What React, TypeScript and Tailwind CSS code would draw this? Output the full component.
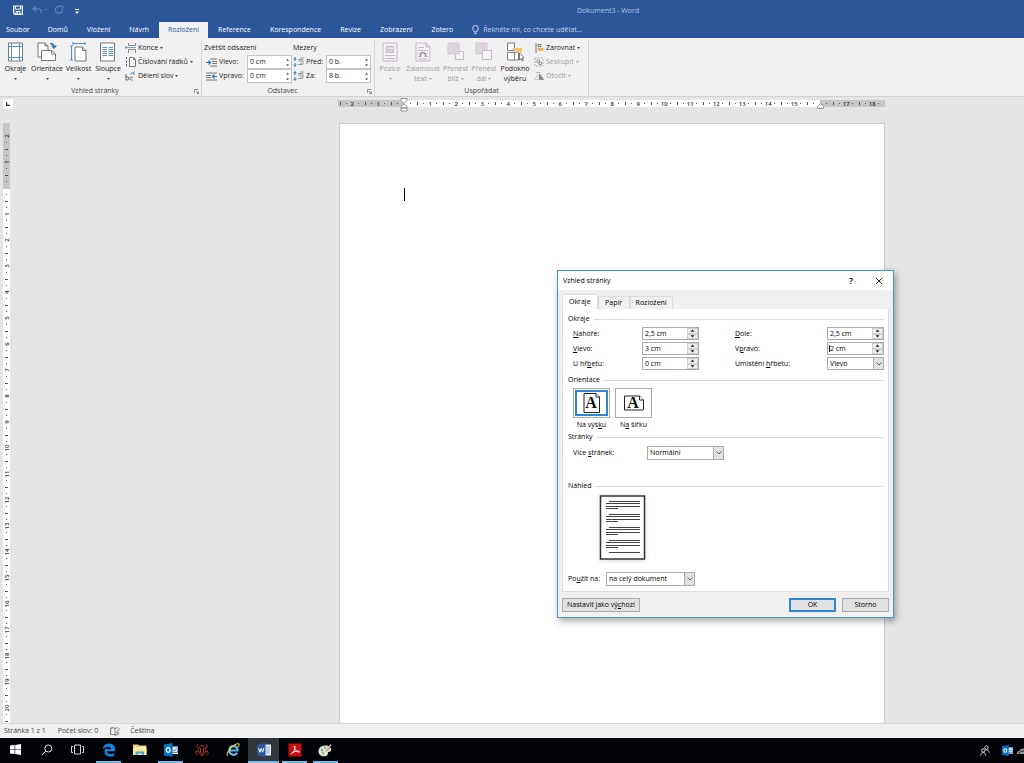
import React, { useId, useState } from "react";

const RIBBON_TABS = [
  "Soubor",
  "Domů",
  "Vložení",
  "Návrh",
  "Rozložení",
  "Reference",
  "Korespondence",
  "Revize",
  "Zobrazení",
  "Zotero",
];

/* ---------- small helpers ---------- */

function Caret({ className = "" }: { className?: string }) {
  return (
    <svg width="3" height="2" viewBox="0 0 3 2" className={`inline-block opacity-80 ${className}`}>
      <path d="M0 0h3L1.500 2z" fill="currentColor" />
    </svg>
  );
}

function Stepper({ boxed = false, name }: { boxed?: boolean; name: string }) {
  const btn = boxed
    ? "flex flex-1 items-center justify-center border border-[#cfcfcf] bg-[#f0f0f0]"
    : "flex flex-1 items-center justify-center";
  return (
    <div className={`flex shrink-0 flex-col text-[#222] ${boxed ? "w-[11px]" : "w-2"}`}>
      <button type="button" aria-label={`${name} více`} className={btn}>
        <svg width="5" height="3" viewBox="0 0 5 3">
          <path d={boxed ? "M.5 2.700L2.500.5L4.500 2.700z" : "M1 2.500L2.500 1L4 2.500z"} fill="currentColor" />
        </svg>
      </button>
      <button type="button" aria-label={`${name} méně`} className={btn}>
        <svg width="5" height="3" viewBox="0 0 5 3">
          <path d={boxed ? "M.5.3L2.500 2.500L4.500.3z" : "M1 .5L2.500 2L4 .5z"} fill="currentColor" />
        </svg>
      </button>
    </div>
  );
}

/* ---------- title bar + tabs ---------- */

function TitleBar() {
  return (
    <div className="relative flex h-[22px] items-center text-white">
      <div className="flex items-center pb-[2px] pl-[13px]">
        <button type="button" aria-label="Uložit" className="w-[19px]">
          <svg width="10" height="10" viewBox="0 0 10 10" fill="none" stroke="#fff">
            <path d="M.7 1h8.600v8.300H1.700L.7 8.300z" strokeWidth="1.200" />
            <path d="M2.500 1v3.200h5V1" />
            <path d="M3 9V6.500h4V9M4.500 7v2" />
          </svg>
        </button>
        <button type="button" aria-label="Zpět" className="w-[22px] text-[#5f80b8]">
          <svg width="16" height="10" viewBox="0 0 16 10" fill="none" stroke="currentColor" strokeWidth="1.200">
            <path d="M4 1L1 3.800L4 6.500M1 3.800h5c2.500 0 3.500 1.400 3 4" />
            <path d="M12.500 4h3L14 5.500z" fill="currentColor" stroke="none" />
          </svg>
        </button>
        <button type="button" aria-label="Opakovat" className="w-[21px] text-[#5f80b8]">
          <svg width="10" height="10" viewBox="0 0 10 10" fill="none" stroke="currentColor" strokeWidth="1.200">
            <path d="M6.500 1.700A3.500 3.500 0 1 0 8.300 4M5.500 1H9M8.500.5v3.300" />
          </svg>
        </button>
        <button type="button" aria-label="Přizpůsobit panel" className="pt-[2px]">
          <svg width="4" height="5" viewBox="0 0 4 5" fill="#fff">
            <path d="M0 0h4v1H0zM0 2.500h4L2 5z" />
          </svg>
        </button>
      </div>
      <div className="absolute left-[577px] text-[#b4c5e0]">Dokument3 - Word</div>
    </div>
  );
}

function RibbonTabs({ active, onChange }: { active: string; onChange: (t: string) => void }) {
  return (
    <nav className="flex h-4 gap-px text-white">
      {RIBBON_TABS.map((tab) => (
        <button
          key={tab}
          type="button"
          onClick={() => onChange(tab)}
          className={`whitespace-nowrap ${tab === "Soubor" ? "pr-2 pl-[6px]" : "px-[9px]"} ${
            tab === active ? "bg-[#f1f1f1] text-[#2b579a]" : ""
          }`}
        >
          {tab}
        </button>
      ))}
      <button type="button" className="flex items-center gap-1 pl-[9px] text-[#c5d2e8]">
        <svg width="7" height="10" viewBox="0 0 7 10" fill="none" stroke="#e4ebf6" strokeWidth=".9">
          <path d="M2.200 7V5.900C1.200 5.200.7 4.400.7 3.300a2.800 2.800 0 0 1 5.600 0c0 1.100-.5 1.900-1.500 2.600V7zM2.300 8.700h2.400" />
        </svg>
        Řekněte mi, co chcete udělat...
      </button>
    </nav>
  );
}

/* ---------- ribbon icons ---------- */

const MarginsIcon = () => (
  <svg width="18" height="20" viewBox="0 0 18 20" fill="none">
    <path d="M1.500 1h14v18h-14z" fill="#fff" stroke="#777" />
    <path d="M4.500 1v18M12.500 1v18M1.500 4.500h14M1.500 15.500h14" stroke="#5a8fc4" />
  </svg>
);

const OrientationIcon = () => (
  <svg width="20" height="20" viewBox="0 0 20 20" fill="none">
    <path d="M1 1h7l3 3v11H1z" fill="#fff" stroke="#777" />
    <path d="M8 1v3h3" stroke="#777" />
    <path d="M4.500 8.500h10l4 3.500v6.500h-14z" fill="#fff" stroke="#777" />
    <path d="M14.500 8.500V12h4" stroke="#777" />
    <path d="M13 1.500c3 0 4 1 4 3.500M14.700 3.500L17 6l2.300-2.500" stroke="#2e75b6" strokeWidth="1.400" />
  </svg>
);

const SizeIcon = () => (
  <svg width="18" height="20" viewBox="0 0 18 20" fill="none">
    <path d="M3 1.500h12M3 0v3M15 0v3M1.500 4v14M0 4h3M0 18h3" stroke="#5a8fc4" />
    <path d="M5 5h7.500L16 8.500V19H5z" fill="#fff" stroke="#777" />
    <path d="M12.500 5v3.500H16" stroke="#777" />
  </svg>
);

const ColumnsIcon = () => (
  <svg width="18" height="20" viewBox="0 0 18 20" fill="none">
    <path d="M1.500 1h14v18h-14z" fill="#fff" stroke="#777" />
    <path
      d="M3.500 5.500H8M3.500 7.500H8M3.500 9.500H8M3.500 11.500H8M3.500 13.500H8M9.500 5.500H14M9.500 7.500H14M9.500 9.500H14M9.500 11.500H14M9.500 13.500H14"
      stroke="#5a8fc4"
    />
  </svg>
);

const BreaksIcon = () => (
  <svg width="11" height="10" viewBox="0 0 11 10" fill="none" stroke="#888">
    <path d="M3.500 0v2.500h7V0M3.500 10V6.500h7V10" />
    <path d="M0 4.500h11M1.500 3L0 4.500L1.500 6" stroke="#5a8fc4" strokeWidth=".8" />
  </svg>
);

const LineNumbersIcon = () => (
  <svg width="11" height="10" viewBox="0 0 11 10" fill="none" stroke="#777">
    <path d="M4.500.5h4l2 2v7h-6zM8.500.5v2h2" fill="#fff" />
    <path d="M1.500 0v2M1.500 3.500v2M1.500 7v2.500" stroke="#2e75b6" />
  </svg>
);

const HyphenIcon = () => (
  <svg width="11" height="10" viewBox="0 0 11 10" fill="none" stroke="#555" strokeWidth=".9">
    <path d="M1 3v6h1.200a1.600 1.600 0 0 0 0-3.200H1M7.500 6.200H6.300a1.300 1.300 0 0 0 0 2.800H7.500" />
    <path d="M5 3.500l1.500-1.500h2M9.800.8a1.300 1.300 0 1 0 0 2.600" stroke="#2e75b6" />
  </svg>
);

const IndentIcon = ({ flip = false }: { flip?: boolean }) => (
  <svg width="11" height="9" viewBox="0 0 11 9" fill="none">
    <path
      d={flip ? "M0 1h11M0 3.500h5M0 5.500h5M0 8h11" : "M4 1h7M6 3.500h5M6 5.500h5M4 8h7"}
      stroke="#777"
    />
    <path d={flip ? "M11 4.500H6.500M8.500 2.500l-2 2l2 2" : "M0 4.500h4.500M2.500 2.500l2 2l-2 2"} stroke="#2e75b6" strokeWidth="1.200" />
  </svg>
);

const SpacingIcon = () => (
  <svg width="11" height="10" viewBox="0 0 11 10" fill="none">
    <path d="M2 .5v3.500M2 6v3.500M.5 2.300L2 .8l1.500 1.500M.5 7.700L2 9.200l1.500-1.500" stroke="#2e75b6" />
    <path d="M7 1h4M5 2.500h5M5 4h6M7 6h4M5 7.500h5" stroke="#888" strokeWidth=".8" />
  </svg>
);

const PositionIcon = () => (
  <svg width="18" height="20" viewBox="0 0 18 20" fill="none" stroke="#c2bac3">
    <path d="M2 1h14v18H2z" fill="#f5f0f5" />
    <path d="M5.500 4.500h7v6h-7z" fill="#e6dfe6" />
    <path d="M6 10l2-3l1.500 2l1-1l2 2M4 13.500h10M4 16.500h10" />
  </svg>
);

const WrapIcon = () => (
  <svg width="18" height="20" viewBox="0 0 18 20" fill="none" stroke="#c2bac3">
    <path d="M2 1h10l4 4v14H2zM12 1v4h4" fill="#f5f0f5" />
    <path d="M4 5.500h6M4 8.500h10M4 11.500h1.500M12.500 11.500H14M4 14.500h1.500M12.500 14.500H14M4 17h10" />
    <path d="M6.500 15v-2a2.500 2.500 0 0 1 5 0v2" stroke="#9b959e" strokeWidth="1.600" />
  </svg>
);

const BringForwardIcon = () => (
  <svg width="18" height="20" viewBox="0 0 18 20" fill="none" stroke="#c5bcc6">
    <path d="M8.500 9.500h8v8h-8z" fill="#f7f4f7" />
    <path d="M1 1h11v11H1z" fill="#ddd4dd" stroke="#d2c8d2" />
  </svg>
);

const SendBackIcon = () => (
  <svg width="18" height="20" viewBox="0 0 18 20" fill="none" stroke="#c5bcc6">
    <path d="M1 1h11v11H1z" fill="#ddd4dd" stroke="#d2c8d2" />
    <path d="M7.500 8.500h9v9h-9z" fill="#f7f4f7" />
  </svg>
);

const SelectionPaneIcon = () => (
  <svg width="18" height="20" viewBox="0 0 18 20" fill="none">
    <path d="M1.500 1h7v7.500h-7zM1.500 10.500h7V18h-7zM8.500 10.500h4V18h-4" fill="#fff" stroke="#7d7d7d" />
    <path d="M6.500 6H16v4.500H10V8H6.500z" fill="#f2c46c" />
    <path d="M13.500 11v7l1.600-1.500l1 2.500l1.200-.6l-1-2.300h2z" fill="#fff" stroke="#555" strokeWidth=".8" />
  </svg>
);

const AlignIcon = () => (
  <svg width="10" height="10" viewBox="0 0 10 10" fill="none" stroke="#777">
    <path d="M2 0v10" />
    <path d="M4 1.500h3v2H4z" />
    <path d="M4 5h5v2.500H4z" fill="#f2b75c" stroke="#e0a040" strokeWidth=".6" />
  </svg>
);

const GroupIcon = () => (
  <svg width="10" height="10" viewBox="0 0 10 10" fill="none" stroke="#b6aeb6">
    <path d="M1 1h8v8H1z" strokeDasharray="2 1" />
    <path d="M3 3h2.500v2.500H3zM5 5h2.500v2.500H5z" stroke="#a39ba3" />
  </svg>
);

const RotateIcon = () => (
  <svg width="10" height="10" viewBox="0 0 10 10" fill="none" stroke="#b6aeb6">
    <path d="M4 8.500V3L.5 8.500z" strokeDasharray="1 1" />
    <path d="M5.500 3v5.500H9.500z" fill="#8d878d" stroke="#8d878d" />
    <path d="M2 1.500h4" />
  </svg>
);

/* ---------- ribbon ---------- */

interface LargeButtonProps {
  icon: React.ReactNode;
  label: string;
  second?: string;
  caret?: boolean;
  disabled?: boolean;
  className: string;
}

function LargeButton({ icon, label, second, caret = true, disabled, className }: LargeButtonProps) {
  return (
    <button
      type="button"
      disabled={disabled}
      className={`flex shrink-0 flex-col items-center whitespace-nowrap ${disabled ? "text-[#9c9c9c]" : "text-[#222]"} ${className}`}
    >
      {icon}
      <span className="mt-[2px] leading-[10px]">{label}</span>
      <span className="flex h-[10px] items-center gap-[2px] leading-[10px]">
        {second}
        {caret && <Caret />}
      </span>
    </button>
  );
}

function SmallButton({ icon, label, disabled }: { icon: React.ReactNode; label: string; disabled?: boolean }) {
  return (
    <button
      type="button"
      disabled={disabled}
      className={`flex h-[14px] items-center gap-[2px] whitespace-nowrap ${disabled ? "text-[#9c9c9c]" : "text-[#222]"}`}
    >
      {icon}
      {label}
      <Caret />
    </button>
  );
}

function SpinField({ icon, label, value, labelWidth }: { icon: React.ReactNode; label: string; value: string; labelWidth: string }) {
  const id = useId();
  return (
    <div className="flex h-[14px] items-center">
      {icon}
      <label htmlFor={id} className={`pl-[2px] ${labelWidth}`}>
        {label}
      </label>
      <div className="flex h-[14px] w-[45px] border border-[#c6c6c6] bg-white">
        <input id={id} defaultValue={value} className="w-full min-w-0 bg-transparent pl-[2px] outline-none" />
        <Stepper name={label} />
      </div>
    </div>
  );
}

function RibbonGroup({ title, launcher, className, children }: { title: string; launcher?: boolean; className: string; children: React.ReactNode }) {
  return (
    <section className={`flex shrink-0 flex-col border-r border-[#d8d8d8] ${className}`}>
      <div className="flex h-[46px]">{children}</div>
      <div className={`relative h-[10px] text-center leading-[10px] text-[#444] ${launcher ? "pr-[11px]" : ""}`}>
        {title}
        {launcher && (
          <button type="button" aria-label={`${title} – další možnosti`} className="absolute top-[3px] right-[2px]">
            <svg width="5" height="5" viewBox="0 0 5 5" fill="none" stroke="#777" strokeWidth=".8">
              <path d="M.5 4V.5H4M2 2l2.500 2.500M4.500 2.500v2h-2" />
            </svg>
          </button>
        )}
      </div>
    </section>
  );
}

function Ribbon() {
  return (
    <div className="flex h-[59px] border-b border-[#d2d2d2] bg-[#f1f1f1] pt-[2px] text-[#222]">
      <RibbonGroup title="Vzhled stránky" launcher className="w-[202px]">
        <div className="flex pt-[2px]">
          <LargeButton icon={<MarginsIcon />} label="Okraje" className="w-[31px]" />
          <LargeButton icon={<OrientationIcon />} label="Orientace" className="w-[32px]" />
          <LargeButton icon={<SizeIcon />} label="Velikost" className="w-[31px]" />
          <LargeButton icon={<ColumnsIcon />} label="Sloupce" className="w-[28px]" />
        </div>
        <div className="flex flex-col pt-px pl-[3px]">
          <SmallButton icon={<BreaksIcon />} label="Konce" />
          <SmallButton icon={<LineNumbersIcon />} label="Číslování řádků" />
          <SmallButton icon={<HyphenIcon />} label="Dělení slov" />
        </div>
      </RibbonGroup>

      <RibbonGroup title="Odstavec" launcher className="w-[173px]">
        <div className="w-[90px] pt-px pl-[2px]">
          <div className="h-[14px] leading-[14px]">Zvětšit odsazení</div>
          <div className="pl-[2px]">
            <SpinField icon={<IndentIcon />} label="Vlevo:" value="0 cm" labelWidth="w-[30px]" />
            <SpinField icon={<IndentIcon flip />} label="Vpravo:" value="0 cm" labelWidth="w-[30px]" />
          </div>
        </div>
        <div className="pt-px pl-[1px]">
          <div className="h-[14px] leading-[14px]">Mezery</div>
          <SpinField icon={<SpacingIcon />} label="Před:" value="0 b." labelWidth="w-[22px]" />
          <SpinField icon={<SpacingIcon />} label="Za:" value="8 b." labelWidth="w-[22px]" />
        </div>
      </RibbonGroup>

      <RibbonGroup title="Uspořádat" className="w-[214px]">
        <div className="flex pt-[2px]">
          <LargeButton icon={<PositionIcon />} label="Pozice" disabled className="w-[30px]" />
          <LargeButton icon={<WrapIcon />} label="Zalamovat" second="text" disabled className="w-[36px]" />
          <LargeButton icon={<BringForwardIcon />} label="Přenést" second="blíž" disabled className="w-[29px]" />
          <LargeButton icon={<SendBackIcon />} label="Přenést" second="dál" disabled className="w-[28px]" />
          <LargeButton icon={<SelectionPaneIcon />} label="Podokno" second="výběru" caret={false} className="w-[34px]" />
        </div>
        <div className="flex flex-col pt-px pl-[2px]">
          <SmallButton icon={<AlignIcon />} label="Zarovnat" />
          <SmallButton icon={<GroupIcon />} label="Seskupit" disabled />
          <SmallButton icon={<RotateIcon />} label="Otočit" disabled />
        </div>
      </RibbonGroup>
    </div>
  );
}

/* ---------- rulers ---------- */

// one centimetre: number, dot, half tick, dot
function RulerCell({ n, vertical = false }: { n: number; vertical?: boolean }) {
  const hidden = n === 0 || (!vertical && n === 16);
  return (
    <div
      className={`grid shrink-0 items-center justify-items-center ${vertical ? "h-[26px] w-full grid-rows-4" : "h-full w-[26px] grid-cols-4"}`}
    >
      <span className={`flex h-0 w-0 items-center justify-center ${vertical ? "-rotate-90" : ""}`}>{hidden ? "" : Math.abs(n)}</span>
      <span className="size-px bg-[#555]" />
      <span className={vertical ? "h-px w-[3px] bg-[#555]" : "h-[3px] w-px bg-[#555]"} />
      <span className="size-px bg-[#555]" />
    </div>
  );
}

function HorizontalRuler() {
  const cells = Array.from({ length: 21 }, (_, i) => i - 2);
  return (
    <div className="relative ml-[324px] h-[7px] w-[547px] bg-[linear-gradient(to_right,#c6c6c6_66px,#fff_66px,#fff_482px,#c6c6c6_482px)] text-[#333]">
      <div className="flex h-full items-center overflow-hidden text-[6px] font-semibold">
        <div className="grid w-[11px] shrink-0 grid-cols-2 items-center justify-items-center">
          <span className="h-[3px] w-px bg-[#555]" />
          <span className="size-px bg-[#555]" />
        </div>
        {cells.map((n) => (
          <RulerCell key={n} n={n} />
        ))}
      </div>
      <svg className="absolute -top-[2px] left-[62px]" width="8" height="14" viewBox="0 0 8 14" fill="#fff" stroke="#888" strokeWidth=".9">
        <path d="M1 .5h6v2L4 5.500L1 2.500zM4 6l3 2.500v1.500H1V8.500zM1 10h6v3H1z" />
      </svg>
      <svg className="absolute top-[3px] left-[479px]" width="7" height="6" viewBox="0 0 7 6" fill="#fff" stroke="#888" strokeWidth=".9">
        <path d="M3.500.5l3 3v2h-6v-2z" />
      </svg>
    </div>
  );
}

function VerticalRuler() {
  const cells = Array.from({ length: 23 }, (_, i) => i - 2);
  return (
    <div className="ml-[3px] w-[7px] overflow-hidden bg-[linear-gradient(to_bottom,#c6c6c6_66px,#fff_66px)] pt-[10px] text-[6px] font-semibold text-[#333]">
      {cells.map((n) => (
        <RulerCell key={n} n={n} vertical />
      ))}
    </div>
  );
}

/* ---------- page setup dialog ---------- */

function Section({ title }: { title: string }) {
  return (
    <div className="flex h-[10px] items-center gap-1 leading-[10px]">
      {title}
      <span className="h-px flex-1 bg-[#dcdcdc]" />
    </div>
  );
}

function DialogSpin({ label, name, value, focused }: { label: React.ReactNode; name: string; value: string; focused?: boolean }) {
  const id = useId();
  return (
    <>
      <label htmlFor={id}>{label}</label>
      <div className="flex h-[13px] items-stretch border border-[#ababab] bg-white">
        {focused && <span className="my-[2px] ml-px w-px shrink-0 bg-black" />}
        <input id={id} defaultValue={value} className={`w-full min-w-0 outline-none ${focused ? "" : "pl-[2px]"}`} />
        <Stepper boxed name={name} />
      </div>
    </>
  );
}

function DialogSelect({ id, options, className }: { id: string; options: string[]; className: string }) {
  return (
    <div className={`relative ${className}`}>
      <select id={id} className="h-full w-full appearance-none border border-[#ababab] bg-white pr-3 pl-[2px] outline-none">
        {options.map((o) => (
          <option key={o}>{o}</option>
        ))}
      </select>
      <span className="pointer-events-none absolute inset-y-0 right-0 flex w-[11px] items-center justify-center border border-[#ababab] bg-[#e1e1e1]">
        <svg width="6" height="4" viewBox="0 0 6 4" fill="none" stroke="#555" strokeWidth=".9">
          <path d="M.5.5L3 3L5.500.5" />
        </svg>
      </span>
    </div>
  );
}

function OrientationButton({ landscape = false, active, onClick, label }: { landscape?: boolean; active: boolean; onClick: () => void; label: React.ReactNode }) {
  return (
    <button type="button" aria-pressed={active} onClick={onClick} className="flex w-[37px] flex-col items-center">
      <span className="flex h-[30px] w-full border border-[#ababab] bg-white p-px">
        <span className={`flex flex-1 items-center justify-center ${active ? "border-2 border-[#2f86d2]" : ""}`}>
          <svg width="22" height="22" viewBox="0 0 22 22" fill="#fff" stroke="#222">
            {landscape ? (
              <>
                <path d="M1.500 4h15l4 4v10h-19z" />
                <path d="M16.500 4v4h4" />
              </>
            ) : (
              <>
                <path d="M3 1.500h12l3.500 3.500v15.500H3z" />
                <path d="M15 1.500V5h3.500" />
              </>
            )}
            <text x="10" y="16" textAnchor="middle" fill="#111" stroke="none" className="font-['Liberation_Serif',serif] text-[16px] font-bold">
              A
            </text>
          </svg>
        </span>
      </span>
      <span className="mt-[1px] h-[11px] leading-[11px]">{label}</span>
    </button>
  );
}

function PreviewPage() {
  const lines: React.ReactNode[] = [];
  [6, 19, 32, 45].forEach((y) => {
    lines.push(<path key={y} d={`M10 ${y}.5h31M7 ${y + 2}.5h34M7 ${y + 5}.5h34M7 ${y + 7}.5h12`} />);
  });
  return (
    <svg width="47" height="65" viewBox="0 0 47 65" fill="none" stroke="#444" className="drop-shadow-sm">
      <path d="M1.500 1h44v63h-44z" fill="#fff" stroke="#333" strokeWidth="1.500" />
      {lines}
      <path d="M10 57.500h31" />
    </svg>
  );
}

function PageSetupDialog() {
  const [tab, setTab] = useState("Okraje");
  const [landscape, setLandscape] = useState(false);

  return (
    <div
      role="dialog"
      aria-label="Vzhled stránky"
      className="absolute top-[270px] left-[557px] flex w-[337px] flex-col border border-[#4a94cf] bg-[#f0f0f0] text-black shadow-[2px_3px_7px_rgba(0,0,0,0.35)]"
    >
      <header className="flex h-[19px] items-center bg-white pr-[10px] pl-[5px]">
        <span className="flex-1">Vzhled stránky</span>
        <button type="button" aria-label="Nápověda" className="w-[14px] text-[9px] font-semibold">
          ?
        </button>
        <button type="button" aria-label="Zavřít" className="ml-[17px]">
          <svg width="8" height="8" viewBox="0 0 8 8" stroke="#222" fill="none">
            <path d="M1 1l6 6M7 1L1 7" />
          </svg>
        </button>
      </header>

      <div className="flex flex-col px-1 pt-1 pb-[5px]">
        <div className="flex h-[15px] items-end">
          {["Okraje", "Papír", "Rozložení"].map((t) => (
            <button
              key={t}
              type="button"
              onClick={() => setTab(t)}
              className={`border-x border-t border-[#dcdcdc] ${t === tab ? "h-[15px] bg-white px-[6px]" : "h-[13px] px-[5px]"} ${
                t === "Papír" ? "w-[32px]" : ""
              }`}
            >
              {t}
            </button>
          ))}
        </div>

        <div className="border border-t-0 border-[#dcdcdc] bg-white pt-[5px] pr-[4px] pb-[5px] pl-[5px]">
          <Section title="Okraje" />
          <div className="mt-[3px] grid grid-cols-[69px_57px_1fr_92px_57px] grid-rows-[13px_13px_13px] items-center gap-y-[2px] pl-[5px]">
            <DialogSpin name="Nahoře" label={<><u>N</u>ahoře:</>} value="2,5 cm" />
            <span />
            <DialogSpin name="Dole" label={<><u>D</u>ole:</>} value="2,5 cm" />
            <DialogSpin name="Vlevo" label={<><u>V</u>levo:</>} value="3 cm" />
            <span />
            <DialogSpin name="Vpravo" label={<>V<u>p</u>ravo:</>} value="2 cm" focused />
            <DialogSpin name="U hřbetu" label={<>U hř<u>b</u>etu:</>} value="0 cm" />
            <span />
            <label htmlFor="gutter-position">
              Umístění <u>h</u>řbetu:
            </label>
            <DialogSelect id="gutter-position" options={["Vlevo", "Nahoře"]} className="h-[13px]" />
          </div>

          <div className="mt-[5px]">
            <Section title="Orientace" />
          </div>
          <div className="mt-[3px] flex gap-[5px] pl-[5px]">
            <OrientationButton active={!landscape} onClick={() => setLandscape(false)} label={<>Na výš<u>k</u>u</>} />
            <OrientationButton landscape active={landscape} onClick={() => setLandscape(true)} label={<>N<u>a</u> šířku</>} />
          </div>

          <div className="mt-[2px]">
            <Section title="Stránky" />
          </div>
          <div className="mt-[4px] flex items-center pl-[5px]">
            <label htmlFor="multiple-pages" className="w-[74px]">
              Více <u>s</u>tránek:
            </label>
            <DialogSelect id="multiple-pages" options={["Normální", "Zrcadlové okraje"]} className="h-[14px] w-[77px]" />
          </div>

          <div className="mt-[21px]">
            <Section title="Náhled" />
          </div>
          <div className="mt-[4px] pl-[31px]">
            <PreviewPage />
          </div>

          <div className="mt-[12px] flex items-center">
            <label htmlFor="apply-to" className="w-[38px]">
              Po<u>u</u>žít na:
            </label>
            <DialogSelect id="apply-to" options={["na celý dokument", "od tohoto místa dále"]} className="h-[14px] w-[89px]" />
          </div>
        </div>

        <footer className="mt-[6px] flex h-[14px] gap-[6px]">
          <button type="button" className="mr-auto border border-[#adadad] bg-[#e1e1e1] px-1 whitespace-nowrap">
            Nastavit jako vý<u>c</u>hozí
          </button>
          <button type="button" className="w-[47px] border-2 border-[#2f86d2] bg-[#e1e1e1] leading-[8px]">
            OK
          </button>
          <button type="button" className="w-[47px] border border-[#adadad] bg-[#e1e1e1]">
            Storno
          </button>
        </footer>
      </div>
    </div>
  );
}

/* ---------- status bar + taskbar ---------- */

function StatusBar() {
  return (
    <div className="flex h-[15px] shrink-0 items-center border-t border-[#d5d5d5] bg-[#f1f1f1] pl-1 text-[#444]">
      <span>Stránka 1 z 1</span>
      <span className="pl-3">Počet slov: 0</span>
      <svg width="10" height="9" viewBox="0 0 10 9" fill="none" stroke="#666" strokeWidth=".9" className="ml-3">
        <path d="M5 1.500v6.500M5 1.500C4 .7 2.500.7.700 1v6.500c2-.2 3.300 0 4.300.7M5 1.500C6 .8 7 .8 8 .8M5 8.200l2.500-.5M6.500 6l3-4.500M7 5.500l2 2M9 5.500l-2 2" />
      </svg>
      <span className="pl-[10px]">Čeština</span>
    </div>
  );
}

const OutlookIcon = ({ size = 14 }: { size?: number }) => (
  <svg width={size} height={size} viewBox="0 0 14 14">
    <path d="M7 3h7v8H7z" fill="#fff" />
    <path d="M7.500 3.500h6v1.500l-3.500 3L7.500 6zM8 9.500h5.500V6.500" fill="#d8ebf9" stroke="#0a72c6" strokeWidth=".8" />
    <path d="M0 1.500L8.500 0v14L0 12.500z" fill="#0a72c6" />
    <ellipse cx="4.200" cy="7" rx="1.900" ry="2.300" fill="none" stroke="#fff" strokeWidth="1.300" />
  </svg>
);

const TASKS = [
  {
    name: "Start",
    state: "",
    icon: (
      <svg width="11" height="11" viewBox="0 0 11 11" fill="#fff">
        <path d="M0 1.600L4.600 1v4.200H0zM5.200.9L11 0v5.200H5.200zM0 5.800h4.600V10L0 9.400zM5.200 5.800H11V11l-5.800-.9z" />
      </svg>
    ),
  },
  {
    name: "Hledat",
    state: "",
    icon: (
      <svg width="12" height="12" viewBox="0 0 12 12" fill="none" stroke="#e8e8e8">
        <circle cx="7.300" cy="4.500" r="3.500" />
        <path d="M4.800 7L1 11" />
      </svg>
    ),
  },
  {
    name: "Zobrazení úkolů",
    state: "",
    icon: (
      <svg width="13" height="11" viewBox="0 0 13 11" fill="none" stroke="#d5d5d5">
        <path d="M3.500 1h6v9h-6zM2 2.500H.5v6H2M11 2.500h1.500v6H11" />
      </svg>
    ),
  },
  {
    name: "Edge",
    state: "open",
    icon: (
      <svg width="14" height="14" viewBox="0 0 14 14" fill="#1583d8">
        <path d="M.8 6.200C1.200 2.600 3.700.5 7.100.5c4 0 6.200 2.900 6.100 6.300v1.400H5c.2 3.200 4.500 3.500 7.200 1.900v2.700c-3.400 1.900-9.700 1.100-9.700-4.200c0-2 1-3.500 2.700-4.300c-.5.500-.8 1.200-.9 2H9c0-1.600-.9-2.500-2.700-2.500C4 3.800 2 4.800.8 6.200z" />
      </svg>
    ),
  },
  {
    name: "Průzkumník",
    state: "",
    icon: (
      <svg width="14" height="13" viewBox="0 0 14 13">
        <path d="M0 1.500h5l1 1h7.500V12H0z" fill="#f6d36b" />
        <path d="M1 4h12v2H1z" fill="#fff4c4" />
        <path d="M0 5.500h13.500V12H0z" fill="#fbe69a" />
        <path d="M2.500 12V8.500h8.500V12H9V10.500H4.500V12z" fill="#4aa3d8" />
      </svg>
    ),
  },
  { name: "Outlook", state: "open", icon: <OutlookIcon /> },
  {
    name: "Bug",
    state: "",
    icon: (
      <svg width="14" height="14" viewBox="0 0 14 14" fill="none" stroke="#a8341f" strokeWidth="1">
        <path d="M4.500 3.500Q7 1 9.500 3.500L11 6.500Q10.500 11 7 13Q3.500 11 3 6.500zM5.500 5v4L7 11l1.500-2V5" />
        <path d="M3.500 5L1.500 3.500L3.200 1M10.500 5l2-1.500L10.800 1M3 8L1 8.500V10.500L3 12.500M11 8l2 .5v2l-2 2" />
      </svg>
    ),
  },
  {
    name: "Internet Explorer",
    state: "",
    icon: (
      <svg width="14" height="14" viewBox="0 0 14 14" fill="none">
        <path d="M4 7.500h7.500C11.500 4.500 9.700 3.200 7.500 3.200C5 3.200 3.400 5 3.400 7.500c0 4.700 6.200 5.500 7.800 2.300" stroke="#57bdf0" strokeWidth="2.200" />
        <path d="M1.500 13C0 11 3 6.500 6.500 3.500S13 0 13 1.500c.2.800-.1 1.700-.6 2.500" stroke="#f3c637" strokeWidth="1.100" />
      </svg>
    ),
  },
  {
    name: "Word",
    state: "active",
    icon: (
      <svg width="14" height="14" viewBox="0 0 14 14">
        <path d="M7 1.500h7v11H7z" fill="#e9effa" />
        <path d="M9 4h4M9 6h4M9 8h4M9 10h4" stroke="#7d9bd0" strokeWidth=".8" />
        <path d="M0 1.500L8.500 0v14L0 12.500z" fill="#2b579a" />
        <path d="M1.700 5l1.100 4.200L4.200 5.500l1.400 3.700L6.800 5" fill="none" stroke="#fff" />
      </svg>
    ),
  },
  {
    name: "Acrobat",
    state: "open",
    icon: (
      <svg width="14" height="14" viewBox="0 0 14 14">
        <path d="M.5.5h13v13H.5z" fill="#c5100c" />
        <path d="M3 11c2-1 4.300-5 4-7.500c-.3-1.300-1.200-.5-.5 1.500C7.200 7 9 9 11 9.200c1 0 .8-1.200-1-1.200C7.500 8 5 9 3 11z" fill="none" stroke="#fff" strokeWidth=".9" />
      </svg>
    ),
  },
  {
    name: "Malování",
    state: "open",
    icon: (
      <svg width="15" height="14" viewBox="0 0 15 14">
        <path d="M.5 8.500C.5 4 4.500 2 8.500 2.500S14 6 13 8c-1 1.300-2.500.3-3 1.500s.5 2.500-2 3.500C4 14 .5 12 .5 8.500z" fill="#dfe4e3" />
        <circle cx="4" cy="7" r="1.200" fill="#5bb76a" />
        <circle cx="7" cy="4.800" r="1.200" fill="#8fb7a0" />
        <circle cx="10.500" cy="5.500" r="1" fill="#d8524a" />
        <circle cx="5" cy="10.300" r="1.200" fill="#9fb76a" />
        <path d="M7.500 9L13 1.500" stroke="#d8a58a" strokeWidth="1.400" />
      </svg>
    ),
  },
];

function Taskbar() {
  return (
    <div className="flex h-[25px] shrink-0 overflow-hidden bg-[#020306]">
      {TASKS.map((task) => (
        <button
          key={task.name}
          type="button"
          aria-label={task.name}
          className={`flex w-[31px] shrink-0 flex-col items-center ${task.state === "active" ? "bg-[#33383f]" : ""}`}
        >
          <span className="flex flex-1 items-center">{task.icon}</span>
          <span
            className={`h-[2px] ${task.state === "active" ? "w-full bg-[#76b9ed]" : task.state === "open" ? "w-[25px] bg-[#76b9ed]" : ""}`}
          />
        </button>
      ))}
      <div className="ml-auto flex items-center gap-3">
        <svg width="10" height="11" viewBox="0 0 10 11" fill="none" stroke="#e0e0e0" strokeWidth=".9">
          <circle cx="6.500" cy="2.500" r="1.700" />
          <circle cx="3.200" cy="5.500" r="1.700" />
          <path d="M.7 10.500c0-4 5-4 5 0M5.500 5.200c2-1 3.500.3 3.700 2.500" />
        </svg>
        <OutlookIcon size={11} />
        <svg width="7" height="8" viewBox="0 0 7 8" className="-ml-2">
          <path d="M0 7h7V1.500C4.500 1 3 2.500 2.500 3.800C1 4 0 5 0 7z" fill="#9a9a9a" />
          <path d="M2 7C2 5 4 4 7 4" fill="none" stroke="#222" />
        </svg>
      </div>
    </div>
  );
}

/* ---------- app ---------- */

export default function App() {
  const [activeTab, setActiveTab] = useState("Rozložení");

  return (
    <div className="relative flex h-screen flex-col overflow-hidden bg-[#e5e5e5] font-['Open_Sans','Noto_Sans',sans-serif] text-[7px] leading-[10px]">
      <div className="shrink-0 bg-[#2b579a]">
        <TitleBar />
        <RibbonTabs active={activeTab} onChange={setActiveTab} />
        <Ribbon />
      </div>

      <main className="grid min-h-0 flex-1 grid-cols-[14px_1fr] grid-rows-[26px_1fr]">
        <div className="pt-[2px] pl-[3px]">
          <div className="flex size-[10px] items-center justify-center bg-white">
            <svg width="4" height="4" viewBox="0 0 4 4" fill="none" stroke="#333" strokeWidth="1.200">
              <path d="M.6 0v3.400H4" />
            </svg>
          </div>
        </div>
        <div className="pt-[3px]">
          <HorizontalRuler />
        </div>
        <VerticalRuler />
        <div className="min-h-0 pl-[325px]">
          <div className="h-full w-[546px] border border-b-0 border-[#cbcbcb] bg-white pt-[64px] pl-[64px]">
            <div className="h-[13px] w-px bg-black" />
          </div>
        </div>
      </main>

      <StatusBar />
      <Taskbar />
      <PageSetupDialog />
    </div>
  );
}
